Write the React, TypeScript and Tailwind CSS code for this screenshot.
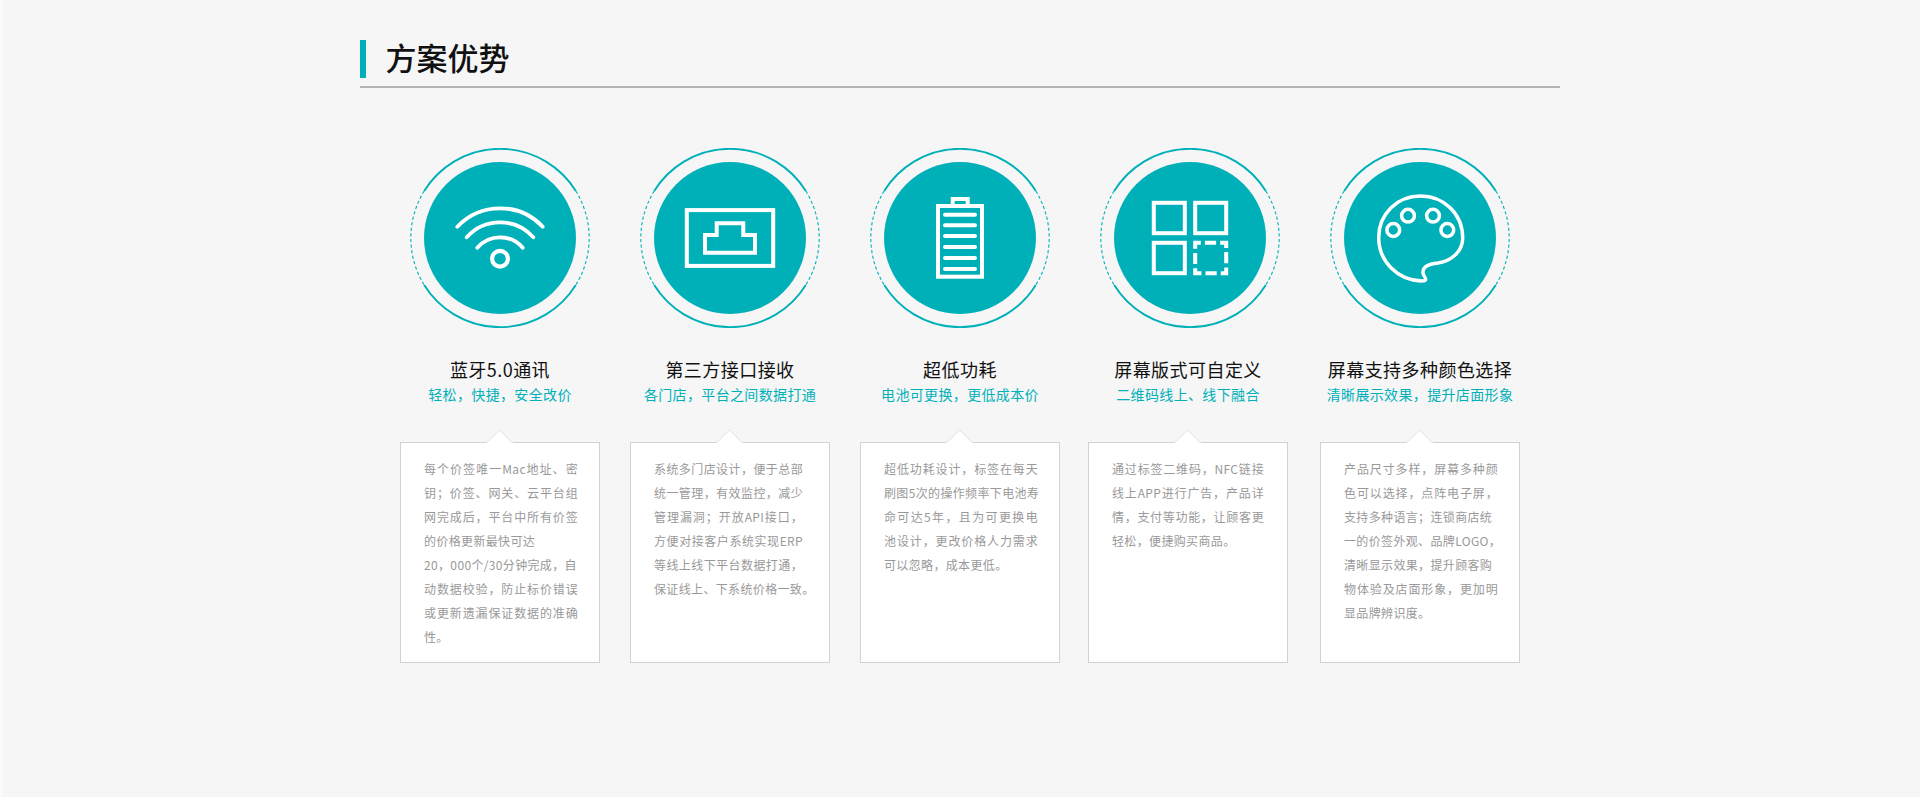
import React from "react";

const TEAL = "#00b0b9";

type Line = { t: string; j?: boolean };
const J = (t: string): Line => ({ t, j: true });
const N = (t: string): Line => ({ t });

function WifiIcon() {
  return (
    <g fill="none" stroke="#fff" strokeWidth="3.8" strokeLinecap="round">
      <path d="M47.3 78.7A58.7 58.7 0 0 1 132.7 78.7" />
      <path d="M56.7 89.3A44.5 44.5 0 0 1 123.3 89.3" />
      <path d="M67.3 99.7A30 30 0 0 1 112.7 99.7" />
      <circle cx="90" cy="110.7" r="7.9" strokeWidth="4.2" />
    </g>
  );
}

function PortIcon() {
  return (
    <g fill="none" stroke="#fff" strokeWidth="4">
      <rect x="46.8" y="62.1" width="86.4" height="55.8" />
      <path d="M65 104.7V87H76.7V75.3H103.3V87H115V104.7Z" />
    </g>
  );
}

function BatteryIcon() {
  const bars = [66.7, 77.3, 88, 99, 110, 121];
  return (
    <g fill="none" stroke="#fff" strokeWidth="4">
      <rect x="68" y="58" width="44" height="70.7" />
      <path d="M82.7 58V51H97.7V58" />
      {bars.map((y) => (
        <path key={y} d={`M75 ${y}H105`} strokeLinecap="round" />
      ))}
    </g>
  );
}

function QrIcon() {
  return (
    <g fill="none" stroke="#fff" strokeWidth="4">
      <rect x="53.8" y="54.8" width="31" height="30.4" />
      <rect x="95.2" y="54.8" width="31" height="30.4" />
      <rect x="53.8" y="94.8" width="31" height="30.4" />
      <rect x="95.2" y="94.8" width="31" height="30.4" strokeDasharray="11.2 4.1" strokeDashoffset="5.6" />
    </g>
  );
}

function PaletteIcon() {
  return (
    <g fill="none" stroke="#fff" strokeWidth="3.5">
      <path d="M91.7 133C67 132 48.7 113 48.7 89.5C48.7 66 67 48 90.5 48C114 48 132.7 66 132.7 90C132.7 103 122 113 108 115C98 116 92.5 119 93 125C93.3 128 96.5 130 95.5 131.8C95 132.8 93.5 133 91.7 133Z" />
      <circle cx="63.3" cy="82" r="6.4" />
      <circle cx="78" cy="67.7" r="6.4" />
      <circle cx="103" cy="67.7" r="6.4" />
      <circle cx="117.3" cy="82" r="6.4" />
    </g>
  );
}

function Badge({ children }: { children: React.ReactNode }) {
  // solid arcs above and below, dashed arcs at the sides
  return (
    <svg width="180" height="180" viewBox="0 0 180 180" className="block">
      <g fill="none" stroke={TEAL}>
        <path d="M14.2 43A89.2 89.2 0 0 1 165.8 43" strokeWidth="1.9" />
        <path d="M14.2 137A89.2 89.2 0 0 0 165.8 137" strokeWidth="1.9" />
        <path d="M165.8 43A89.2 89.2 0 0 1 165.8 137" strokeWidth="1.1" strokeDasharray="3.2 2.4" />
        <path d="M14.2 43A89.2 89.2 0 0 0 14.2 137" strokeWidth="1.1" strokeDasharray="3.2 2.4" />
      </g>
      <circle cx="90" cy="90" r="76" fill={TEAL} />
      {children}
    </svg>
  );
}

function Feature({
  icon,
  title,
  sub,
  lines,
  textClass,
  colClass,
  badgeClass,
}: {
  icon: React.ReactNode;
  title: string;
  sub: string;
  lines: Line[];
  textClass: string;
  colClass?: string;
  badgeClass?: string;
}) {
  return (
    <div className={`flex w-[200px] shrink-0 flex-col items-center ${colClass ?? ""}`}>
      <div className={badgeClass}>
        <Badge>{icon}</Badge>
      </div>
      <h3 className="mt-[28px] whitespace-nowrap text-[18px] leading-[26px] tracking-[0.45px] text-[#111111]">{title}</h3>
      <p className="mt-[1px] whitespace-nowrap text-[14px] leading-[22px] tracking-[0.35px] text-[#00b0b9]">{sub}</p>
      <div className="relative mt-[37px] h-[221px] w-full border border-[#d2d2d2] bg-white pl-[23px] pt-[14px]">
        <span className="absolute left-[89px] top-[-10px] h-[19px] w-[19px] rotate-45 border-l border-t border-[#e6e6e6] bg-white" />
        <div className={`relative text-[12px] leading-[24px] tracking-[0.35px] text-[#999999] ${textClass}`}>
          {lines.map((l, i) => (
            <div key={i} className={l.j ? "whitespace-nowrap [text-align-last:justify]" : "whitespace-nowrap"}>
              {l.t}
            </div>
          ))}
        </div>
      </div>
    </div>
  );
}

export default function App() {
  return (
    <main
      className="min-h-[797px] w-full border-l-2 border-[#fbfbfb] bg-[#f6f6f6] pl-[358px] pt-[40px]"
      style={{ fontFamily: '"Noto Sans CJK SC", "Noto Sans", sans-serif' }}
    >
      <div className="w-[1200px]">
        <header className="flex h-[48px] items-start border-b-2 border-[#b4b4b4]">
          <span className="h-[38px] w-[6px] bg-[#00b0b9]" />
          <h2 className="ml-[19.5px] text-[31px] font-medium leading-[34px] text-[#111111]">方案优势</h2>
        </header>
        <div className="mt-[60px] flex gap-[30px] pl-[40px]">
          <Feature
            icon={<WifiIcon />}
            title="蓝牙5.0通讯"
            sub="轻松，快捷，安全改价"
            textClass="w-[154px]"
            lines={[
              J("每个价签唯一Mac地址、密"),
              J("钥；价签、网关、云平台组"),
              J("网完成后，平台中所有价签"),
              N("的价格更新最快可达"),
              N("20，000个/30分钟完成，自"),
              J("动数据校验，防止标价错误"),
              J("或更新遗漏保证数据的准确"),
              N("性。"),
            ]}
          />
          <Feature
            icon={<PortIcon />}
            title="第三方接口接收"
            sub="各门店，平台之间数据打通"
            textClass="w-[149px]"
            lines={[
              J("系统多门店设计，便于总部"),
              J("统一管理，有效监控，减少"),
              J("管理漏洞；开放API接口，"),
              J("方便对接客户系统实现ERP"),
              J("等线上线下平台数据打通，"),
              N("保证线上、下系统价格一致。"),
            ]}
          />
          <Feature
            icon={<BatteryIcon />}
            title="超低功耗"
            sub="电池可更换，更低成本价"
            textClass="w-[154px]"
            lines={[
              J("超低功耗设计，标签在每天"),
              J("刷图5次的操作频率下电池寿"),
              J("命可达5年，且为可更换电"),
              J("池设计，更改价格人力需求"),
              N("可以忽略，成本更低。"),
            ]}
          />
          <Feature
            icon={<QrIcon />}
            title="屏幕版式可自定义"
            sub="二维码线上、线下融合"
            textClass="w-[152px]"
            colClass="ml-[-2px] mr-[2px]"
            badgeClass="ml-[4px]"
            lines={[
              J("通过标签二维码，NFC链接"),
              J("线上APP进行广告，产品详"),
              J("情，支付等功能，让顾客更"),
              N("轻松，便捷购买商品。"),
            ]}
          />
          <Feature
            icon={<PaletteIcon />}
            title="屏幕支持多种颜色选择"
            sub="清晰展示效果，提升店面形象"
            textClass="w-[154px]"
            lines={[
              J("产品尺寸多样，屏幕多种颜"),
              J("色可以选择，点阵电子屏，"),
              N("支持多种语言；连锁商店统"),
              J("一的价签外观、品牌LOGO，"),
              N("清晰显示效果，提升顾客购"),
              J("物体验及店面形象，更加明"),
              N("显品牌辨识度。"),
            ]}
          />
        </div>
      </div>
    </main>
  );
}
